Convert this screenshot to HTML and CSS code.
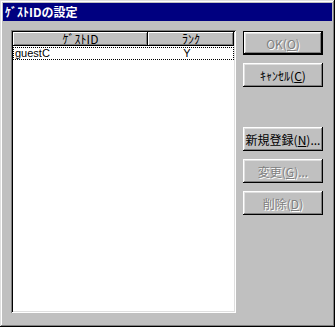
FILE: index.html
```html
<!DOCTYPE html>
<html lang="ja">
<head>
    <meta charset="UTF-8">
    <title>ゲストIDの設定</title>
    <link rel="stylesheet" href="styles.css">
</head>

<body>
    <div class="window">
        <div class="caption">ｹﾞｽﾄIDの設定</div>

        <div class="content">
            <div class="listview">
                <div class="lv-header">
                    <div class="col col-id">ｹﾞｽﾄID</div>
                    <div class="col col-rank">ﾗﾝｸ</div>
                </div>
                <div class="lv-row focused">
                    <div class="cell cell-id">guestC</div>
                    <div class="cell cell-rank">Y</div>
                </div>
            </div>

            <div class="buttons">
                <button class="btn default" disabled>OK(<u>O</u>)</button>
                <button class="btn">ｷｬﾝｾﾙ(<u>C</u>)</button>
                <button class="btn spaced">新規登録(<u>N</u>)...</button>
                <button class="btn" disabled>変更(<u>G</u>)...</button>
                <button class="btn" disabled>削除(<u>D</u>)</button>
            </div>
        </div>
    </div>
</body>
</html>
```

FILE: styles.css
```css
body {
    margin: 0;
    font-family: "Noto Sans CJK JP", "Liberation Sans", sans-serif;
    font-size: 12px;
    background-color: #c0c0c0;
}

.window {
    width: 335px;
    height: 327px;
    box-sizing: border-box;
    padding: 3px;
    background-color: #c0c0c0;
    box-shadow: inset -1px -1px #000000, inset 1px 1px #dfdfdf,
                inset -2px -2px #808080, inset 2px 2px #ffffff;
}

.caption {
    height: 18px;
    line-height: 18px;
    padding-left: 2px;
    background-color: #000080;
    color: #ffffff;
    font-weight: bold;
    font-size: 12px;
}

.content {
    display: flex;
    padding: 9px 8px 0 8px;
}

/* list */

.listview {
    width: 225px;
    height: 283px;
    box-sizing: border-box;
    padding: 2px;
    background-color: #ffffff;
    box-shadow: inset 1px 1px #808080, inset -1px -1px #ffffff,
                inset 2px 2px #000000, inset -2px -2px #dfdfdf;
}

.lv-header {
    display: flex;
    height: 14px;
}

.col {
    background-color: #c0c0c0;
    text-align: center;
    line-height: 14px;
    box-shadow: inset -1px -1px #000000, inset 1px 1px #ffffff,
                inset -2px -2px #808080;
}

.col-id {
    width: 135px;
}

.col-rank {
    flex: 1;
}

.lv-row {
    display: flex;
    height: 13px;
    line-height: 13px;
    margin-top: 1px;
}

.lv-row.focused {
    outline: 1px dotted #000000;
    outline-offset: -1px;
}

.cell-id {
    width: 135px;
    padding-left: 2px;
    font-family: "Liberation Sans", sans-serif;
    font-size: 11px;
}

.cell-rank {
    flex: 1;
    text-align: center;
    padding-right: 10px;
    font-family: "Liberation Sans", sans-serif;
    font-size: 11px;
}

/* buttons */

.buttons {
    display: flex;
    flex-direction: column;
    gap: 8px;
    margin-left: 7px;
    padding-top: 1px;
}

.btn {
    width: 80px;
    height: 24px;
    padding: 0;
    border: none;
    background-color: #c0c0c0;
    font-family: "Noto Sans CJK JP", sans-serif;
    font-size: 12px;
    color: #000000;
    box-shadow: inset -1px -1px #000000, inset 1px 1px #ffffff,
                inset -2px -2px #808080, inset 2px 2px #dfdfdf;
}

.btn.default {
    border: 1px solid #000000;
}

.btn:disabled {
    color: #808080;
    text-shadow: 1px 1px #ffffff;
}

.btn.spaced {
    margin-top: 32px;
}
```
